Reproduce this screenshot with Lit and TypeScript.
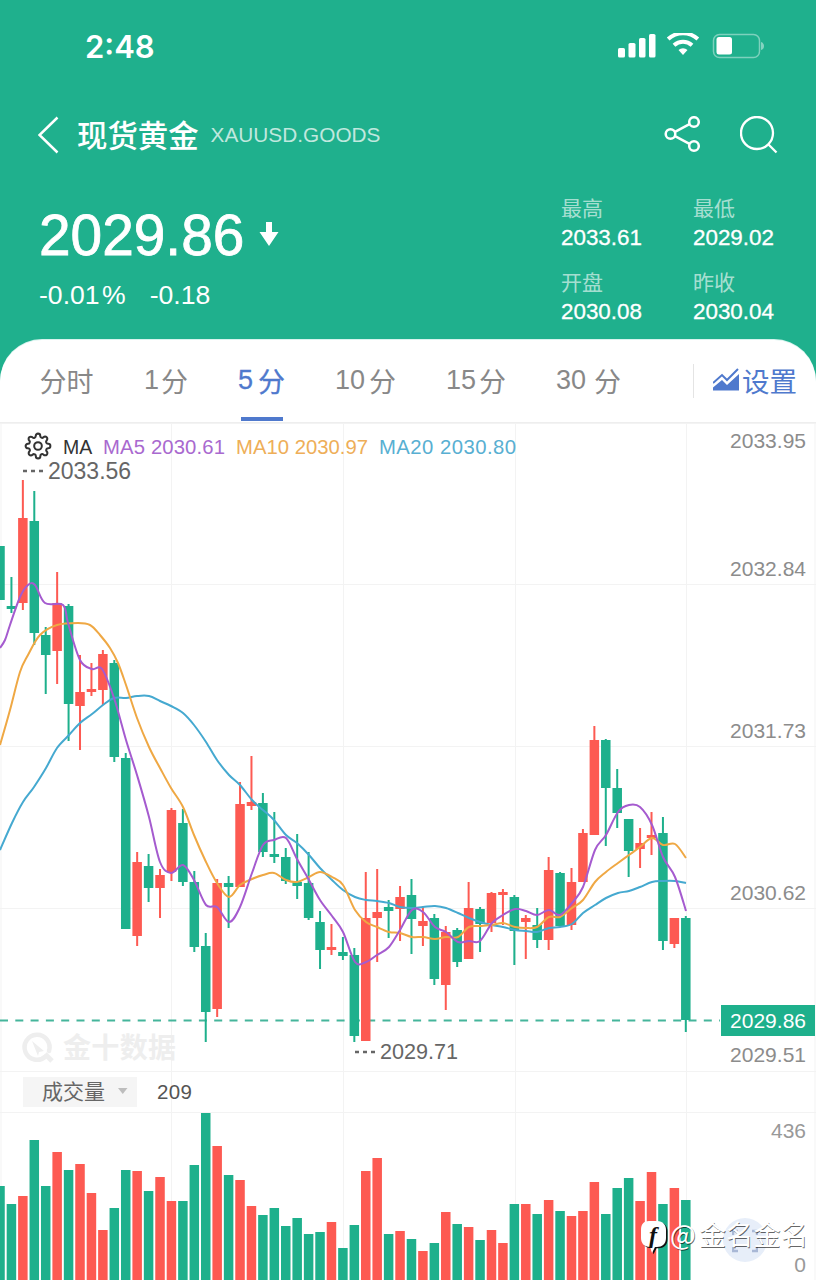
import { LitElement, html, css, svg } from "lit";
import { customElement } from "lit/decorators.js";

const G = "#1eb08c";
const R = "#fd5a52";
// colour, bodyTop, bodyBottom, wickTop, wickBottom, volumeTop
const C: [0 | 1, number, number, number, number, number][] = [
  [0,546,600,546,600,1186],[0,606,609,577,613,1204],[1,518,603,480,610,1196],[0,521,633,491,645,1140],
  [0,635,655,627,694,1186],[1,603,651,572,684,1152],[0,606,704,604,741,1170],[1,692,706,655,750,1164],
  [1,689,692,663,696,1193],[1,654,690,650,705,1230],[0,663,757,660,762,1208],[0,758,929,753,929,1170],
  [1,862,936,852,946,1171],[0,866,888,854,902,1191],[1,875,888,869,918,1177],[1,810,872,808,881,1201],
  [0,823,882,809,886,1201],[0,882,947,871,952,1165],[0,946,1012,933,1042,1113],[1,883,1009,879,1017,1146],
  [0,883,887,876,928,1175],[1,804,887,782,887,1180],[1,802,806,756,810,1206],[0,803,852,793,857,1215],
  [0,854,857,812,863,1208],[0,857,881,848,884,1226],[0,882,886,834,899,1218],[0,883,918,852,920,1234],
  [0,922,950,911,969,1232],[1,947,950,924,955,1222],[0,952,956,937,960,1248],[0,955,1036,948,1042,1225],
  [1,918,1041,872,1041,1171],[1,912,918,869,962,1158],[0,907,911,900,938,1234],[1,897,909,886,941,1231],
  [0,895,919,879,954,1239],[1,921,926,906,946,1251],[0,918,979,914,985,1243],[1,932,985,926,1010,1212],
  [0,930,962,928,967,1224],[1,908,959,882,959,1227],[0,909,924,907,952,1240],[1,893,923,892,932,1230],
  [1,892,895,889,925,1243],[0,897,931,895,965,1204],[1,918,922,915,959,1204],[0,925,940,908,948,1214],
  [1,870,940,857,950,1200],[0,873,926,872,926,1211],[1,882,925,868,930,1216],[1,833,882,829,882,1211],
  [1,740,835,726,835,1182],[0,740,788,739,846,1214],[0,788,813,769,828,1188],[0,819,851,819,877,1178],
  [1,843,849,828,868,1201],[1,835,838,812,855,1172],[0,833,941,817,950,1204],[1,918,944,918,948,1188],
  [0,918,1020,916,1032,1200],
];
const MA5 = "0,648 5,640 10,625 20,597 28,585 35,585 45,603 63,605 68,623 80,660 92,669 102,669 114,698 126,740 137,775 149,817 160,862 171,873 183,865 194,880 206,905 217,907 229,922 240,907 252,873 263,845 274,840 286,838 297,859 309,880 320,900 332,916 343,932 355,962 366,962 377,955 389,947 400,930 412,910 423,912 435,927 446,932 458,942 469,941 480,941 492,923 503,915 515,909 526,911 537,915 549,910 560,915 572,903 583,887 595,850 606,835 618,812 629,805 640,807 652,825 663,857 675,877 686,911";
const MA10 = "0,745 10,710 20,672 28,655 40,635 57,625 78,623 90,625 100,635 110,648 118,663 126,685 137,718 149,747 160,768 171,788 183,807 194,835 206,862 217,883 229,897 240,885 252,879 263,875 274,873 286,880 297,882 309,877 320,872 332,877 343,885 355,910 366,922 377,927 389,932 400,933 412,937 423,937 435,939 446,937 458,937 469,927 480,926 492,925 503,923 515,927 526,928 537,927 549,917 560,917 572,908 583,900 595,882 606,872 618,863 629,855 640,847 652,838 663,845 675,844 686,858";
const MA20 = "0,850 12,823 23,802 34,787 46,768 57,748 69,735 80,723 92,714 103,705 114,698 126,698 137,696 149,696 160,701 171,706 183,713 194,725 206,742 217,760 229,775 240,785 252,800 263,810 274,820 286,835 297,843 309,855 320,868 332,880 343,890 355,897 366,900 377,901 389,903 400,907 412,908 423,907 435,906 446,908 458,913 469,918 480,922 492,925 503,927 515,930 526,931 537,932 549,928 560,927 572,924 583,913 595,905 606,898 618,893 629,891 640,887 652,882 663,881 675,881 686,883";
const GEAR = "M19.4 15a1.65 1.65 0 0 0 .33 1.82l.06.06a2 2 0 0 1 0 2.83 2 2 0 0 1-2.83 0l-.06-.06a1.65 1.65 0 0 0-1.82-.33 1.65 1.65 0 0 0-1 1.51V21a2 2 0 0 1-2 2 2 2 0 0 1-2-2v-.09A1.65 1.65 0 0 0 9 19.4a1.65 1.65 0 0 0-1.82.33l-.06.06a2 2 0 0 1-2.83 0 2 2 0 0 1 0-2.83l.06-.06a1.65 1.65 0 0 0 .33-1.82 1.65 1.65 0 0 0-1.51-1H3a2 2 0 0 1-2-2 2 2 0 0 1 2-2h.09A1.65 1.65 0 0 0 4.6 9a1.65 1.65 0 0 0-.33-1.82l-.06-.06a2 2 0 0 1 0-2.83 2 2 0 0 1 2.83 0l.06.06a1.65 1.65 0 0 0 1.82.33H9a1.65 1.65 0 0 0 1-1.51V3a2 2 0 0 1 2-2 2 2 0 0 1 2 2v.09a1.65 1.65 0 0 0 1 1.51 1.65 1.65 0 0 0 1.82-.33l.06-.06a2 2 0 0 1 2.83 0 2 2 0 0 1 0 2.83l-.06.06a1.65 1.65 0 0 0-.33 1.82V9a1.65 1.65 0 0 0 1.51 1H21a2 2 0 0 1 2 2 2 2 0 0 1-2 2h-.09a1.65 1.65 0 0 0-1.51 1z";

const X = (i: number) => i * 11.43;

// Catmull-Rom through the sampled points, so the moving averages stay round.
function smooth(points: string): string {
  const p = points.split(" ").map(s => s.split(",").map(Number));
  let d = `M${p[0][0]} ${p[0][1]}`;
  for (let i = 0; i < p.length - 1; i++) {
    const a = p[Math.max(i - 1, 0)], b = p[i], c = p[i + 1], e = p[Math.min(i + 2, p.length - 1)];
    const k = 1 / 6;
    const c1x = b[0] + (c[0] - a[0]) * k, c1y = b[1] + (c[1] - a[1]) * k;
    const c2x = c[0] - (e[0] - b[0]) * k, c2y = c[1] - (e[1] - b[1]) * k;
    d += `C${c1x.toFixed(1)} ${c1y.toFixed(1)} ${c2x.toFixed(1)} ${c2y.toFixed(1)} ${c[0]} ${c[1]}`;
  }
  return d;
}

@customElement("app-root")
export class AppRoot extends LitElement {
  static styles = css`
    :host { display: block; width: 816px; height: 1280px; overflow: hidden; position: relative; background: #1fb08d;
      font-family: "Liberation Sans", "Noto Sans CJK SC", sans-serif; color: #fff; }
    .status { height: 92px; display: flex; align-items: center; justify-content: space-between; padding: 0 51px 0 85px; }
    .time { font-family: Inter, "Liberation Sans", sans-serif; font-weight: 600; font-size: 31px; line-height: 1; }
    .status svg { display: block; }
    .title { height: 86px; display: flex; align-items: center; padding: 0 38px; }
    .title .back { margin-right: 18px; }
    .title h1 { margin: 0; font: 500 30.4px/1 "Noto Sans CJK SC", sans-serif; position: relative; top: -1px; }
    .title .code { margin-left: 12px; font-size: 20.8px; color: rgba(255,255,255,.72); }
    .title .acts { margin-left: auto; display: flex; gap: 38px; align-items: center; }
    .quote { height: 162px; display: flex; justify-content: space-between; padding: 0 0 0 39px; }
    .price { padding-top: 28px; }
    .big { display: flex; align-items: center; height: 60px; font-size: 56.8px; line-height: 60px; -webkit-text-stroke: .8px #fff; }
    .big svg { margin-left: 15px; margin-top: -4px; }
    .chg { margin-top: 14px; display: flex; gap: 24px; font-size: 26.6px; line-height: 30px; word-spacing: -5px; }
    .stats { display: grid; grid-template-columns: 132px 123px; row-gap: 16px; padding-top: 15.5px; align-content: start; }
    .stat b { display: block; font-weight: 400; font-size: 21px; line-height: 29px; color: rgba(255,255,255,.62); }
    .stat span { display: block; font-size: 22.4px; line-height: 29px; -webkit-text-stroke: .3px #fff; }
    .panel { background: #fff; border-radius: 42px 42px 0 0; height: 940px; box-shadow: 0 -1px 0 #d8f3ee; }
    .tabs { height: 83px; box-sizing: border-box; border-bottom: 1px solid #eee; display: flex; align-items: stretch; gap: 50px; padding-left: 39px; color: #888; font-size: 27px; }
    .tab { display: flex; align-items: center; justify-content: space-between; position: relative; height: 82px; box-sizing: border-box; padding-bottom: 2px; }
    .w55 { width: 55px; justify-content: center; } .w44 { width: 44px; } .w47 { width: 47px; } .w61 { width: 61px; } .w60 { width: 60px; } .w65 { width: 65px; }
    .tab.on { color: #4f79cd; -webkit-text-stroke: .3px #4f79cd; }
    .tab.on::after { content: ""; position: absolute; left: 3px; right: 2px; bottom: 1px; height: 4px; background: #4f79cd; }
    .set { margin-left: auto; display: flex; align-items: center; gap: 3px; color: #4f79cd; font-size: 27.5px; padding: 0 19px 3px 0; position: relative; }
    .set::before { content: ""; position: absolute; left: -20px; top: 24px; height: 34px; width: 1px; background: #e4e4e4; }
    .chart { display: block; }
    .chart text { font-family: "Liberation Sans", "Noto Sans CJK SC", sans-serif; }
    .mark { position: absolute; left: 638px; top: 1216px; width: 178px; height: 64px; }
    .mark .fab { position: absolute; left: 85px; top: 2px; width: 44px; height: 44px; border-radius: 50%; background: #e7eef9; }
    .mark .fab svg { position: absolute; left: 9px; top: 10px; }
    .mark .bubble { position: absolute; left: 0; top: 4px; }
    .mark .f { position: absolute; left: 2px; top: 4px; width: 26px; text-align: center; font: italic 700 24px/30px "Liberation Serif", serif; color: #111; }
    .mark .at { position: absolute; left: 32px; top: 0; display: flex; gap: 3px; white-space: nowrap; font: 400 27.3px/34px "Noto Sans CJK SC", sans-serif; color: #fff; text-shadow: .7px .8px 0 rgba(0,0,0,.6); }
  `;

  private chart() {
    const hs = [423.5, 584.5, 746.5, 908.5, 1071.5, 1112.5];
    const vs = [1, 171.5, 343.5, 515.5, 686.5, 815];
    const axis: [string, number][] = [["2033.95", 440], ["2032.84", 568], ["2031.73", 730], ["2030.62", 892], ["2029.51", 1054]];
    return html`<svg class="chart" width="816" height="857" viewBox="0 423 816 857" xmlns="http://www.w3.org/2000/svg">
      ${hs.map(y => svg`<line x1="0" x2="816" y1=${y} y2=${y} stroke="#f3f3f3"/>`)}
      ${vs.map(x => svg`<line x1=${x} x2=${x} y1="423" y2="1280" stroke="#f3f3f3"/>`)}
      <g fill="#eeeeee" stroke="none">
        <path d="M45.5 1056.500A12.500 12.500 0 1 1 49 1051" fill="none" stroke="#eeeeee" stroke-width="4.500" stroke-linecap="round"/>
        <path d="M45 1054l7 7" fill="none" stroke="#eeeeee" stroke-width="5"/>
        <path d="M32 1041l12 10-5 1-1 4z"/>
        <text x="63" y="1058" font-size="28" font-weight="700" fill="#eeeeee" textLength="113">金十数据</text>
      </g>
      <line x1="0" x2="720" y1="1020.5" y2="1020.5" stroke="#45b59b" stroke-width="2" stroke-dasharray="8 7.3"/>
      ${C.map((c, i) => {
        const col = c[0] ? R : G, x = X(i);
        return svg`<rect x=${x - 1} y=${c[3]} width="2" height=${c[4] - c[3]} fill=${col}/>
          <rect x=${x - 4.75} y=${c[1]} width="9.5" height=${c[2] - c[1]} fill=${col}/>
          <rect x=${x - 4.75} y=${c[5]} width="9.5" height=${1280 - c[5]} fill=${col}/>`;
      })}
      <path d=${smooth(MA20)} fill="none" stroke="#45a9d0" stroke-width="2"/>
      <path d=${smooth(MA10)} fill="none" stroke="#efa844" stroke-width="2"/>
      <path d=${smooth(MA5)} fill="none" stroke="#a55bcf" stroke-width="2"/>
      <g transform="translate(24.5 432.5) scale(1.125)" fill="none" stroke="#333" stroke-width="1.8" stroke-linejoin="round">
        <circle cx="12" cy="12" r="3.4"/><path d=${GEAR}/>
      </g>
      <g font-size="20.3">
        <text x="63" y="454" fill="#333" font-size="19.5">MA</text>
        <text x="103" y="454" fill="#a969cf" textLength="122">MA5 2030.61</text>
        <text x="236" y="454" fill="#eeae58" textLength="132">MA10 2030.97</text>
        <text x="379" y="454" fill="#58afd2" textLength="137">MA20 2030.80</text>
      </g>
      <line x1="23" x2="43" y1="471" y2="471" stroke="#666" stroke-width="2.6" stroke-dasharray="4 4"/>
      <text x="48" y="479" font-size="23" fill="#666">2033.56</text>
      <line x1="355" x2="375" y1="1052" y2="1052" stroke="#666" stroke-width="2.6" stroke-dasharray="4 4"/>
      <text x="380" y="1058.500" font-size="21.600" fill="#666">2029.71</text>
      <g font-size="21" fill="#8c8c8c" text-anchor="end">
        ${axis.map(([t, y]) => svg`<text x="806" y=${y + 7.5}>${t}</text>`)}
        <text x="806" y="1138" fill="#999">436</text>
        <text x="806" y="1272" fill="#999">0</text>
      </g>
      <rect x="721" y="1005" width="94" height="31" fill=${G}/>
      <text x="806" y="1028" font-size="21" fill="#fff" text-anchor="end">2029.86</text>
      <rect x="23" y="1077" width="114" height="30" fill="#f5f5f5"/>
      <text x="42" y="1099" font-size="21" fill="#666">成交量</text>
      <path d="M118 1088h9.5l-4.75 6z" fill="#bdbdbd"/>
      <text x="157" y="1099" font-size="20.500" fill="#555" textLength="35">209</text>
    </svg>`;
  }

  render() {
    return html`
      <div class="status">
        <span class="time">2:48</span>
        <svg width="147" height="26" viewBox="618 33 147 26">
          <g fill="#fff">
            <rect x="618" y="48" width="7" height="9.5" rx="1.6"/><rect x="628.5" y="43" width="7" height="14.5" rx="1.6"/>
            <rect x="639" y="38" width="6.5" height="19.5" rx="1.6"/><rect x="649" y="34" width="6.5" height="23.5" rx="1.6"/>
            <path d="M683 58l-5-5.5a7.5 7.5 0 0 1 10 0zM674.5 49l-3-3.4a17 17 0 0 1 23 0l-3 3.4a12.5 12.5 0 0 0-17 0zM668 42l-3-3.4a27 27 0 0 1 36 0l-3 3.4a22.5 22.5 0 0 0-30 0z" transform="translate(68.3 2.700) scale(.9)" />
            <rect x="716.5" y="37" width="15.5" height="17.5" rx="2.5"/>
            <path d="M761 42c2 .6 3 2 3 4s-1 3.4-3 4z" opacity=".45"/>
          </g>
          <rect x="713.5" y="34.5" width="46" height="23" rx="6" fill="none" stroke="rgba(255,255,255,.42)" stroke-width="1.5"/>
        </svg>
      </div>
      <div class="title">
        <svg class="back" width="21" height="38" viewBox="0 0 21 38"><path d="M19.5 1.5L1.5 19l18 17.5" fill="none" stroke="#fff" stroke-width="2.5"/></svg>
        <h1>现货黄金</h1>
        <span class="code">XAUUSD.GOODS</span>
        <div class="acts">
          <svg width="38" height="38" viewBox="0 0 38 38" fill="none" stroke="#fff" stroke-width="2.5">
            <circle cx="30" cy="6" r="4.800"/><circle cx="6.500" cy="18" r="4.800"/><circle cx="30" cy="30" r="4.800"/>
            <path d="M11 15.800L25.500 8.200M11 20.200L25.500 27.800"/>
          </svg>
          <svg width="38" height="38" viewBox="0 0 38 38" fill="none" stroke="#fff" stroke-width="2.300">
            <circle cx="17" cy="17" r="16"/><path d="M28.500 28.500L36.500 36.500"/>
          </svg>
        </div>
      </div>
      <div class="quote">
        <div class="price">
          <div class="big">2029.86
            <svg width="20" height="24" viewBox="0 0 20 24"><path d="M7 0h6v10h6.5L10 24 .5 10H7z" fill="#fff"/></svg>
          </div>
          <div class="chg"><span>-0.01 %</span><span>-0.18</span></div>
        </div>
        <div class="stats">
          <div class="stat"><b>最高</b><span>2033.61</span></div>
          <div class="stat"><b>最低</b><span>2029.02</span></div>
          <div class="stat"><b>开盘</b><span>2030.08</span></div>
          <div class="stat"><b>昨收</b><span>2030.04</span></div>
        </div>
      </div>
      <div class="panel">
        <div class="tabs">
          <div class="tab w55">分时</div>
          <div class="tab w44"><span>1</span><span>分</span></div>
          <div class="tab w47 on"><span>5</span><span>分</span></div>
          <div class="tab w61"><span>10</span><span>分</span></div>
          <div class="tab w60"><span>15</span><span>分</span></div>
          <div class="tab w65"><span>30</span><span>分</span></div>
          <div class="set">
            <svg width="26" height="23" viewBox="0 0 26 23"><path d="M0 15L9 7l5 5L25 1" fill="none" stroke="#4f79cd" stroke-width="2"/><path d="M0 22.5v-3l9-7.5 5 5 12-11v16.500z" fill="#4f79cd"/></svg>
            <span>设置</span>
          </div>
        </div>
        ${this.chart()}
      </div>
      <div class="mark">
        <div class="fab"><svg width="26" height="26" viewBox="0 0 26 26" fill="none" stroke="#a9b8d6" stroke-width="2.4"><path d="M1 7V3h5M20 3h5v4M1 19v4h5M20 23h5v-4"/></svg></div>
        <svg class="bubble" width="32" height="36" viewBox="0 0 32 36">
          <path d="M11 1h8c6 0 9 4 9 9v8c0 6-4 9-9 9h-2l-3 6-2-6c-6 0-9-4-9-9v-8c0-6 3-9 8-9z" transform="translate(1.500 1.200)" fill="#111"/>
          <path d="M11 1h8c6 0 9 4 9 9v8c0 6-4 9-9 9h-2l-3 6-2-6c-6 0-9-4-9-9v-8c0-6 3-9 8-9z" fill="#fff"/>
        </svg>
        <span class="f">f</span>
        <span class="at"><span>@</span><span>金名金名</span></span>
      </div>
    `;
  }
}
